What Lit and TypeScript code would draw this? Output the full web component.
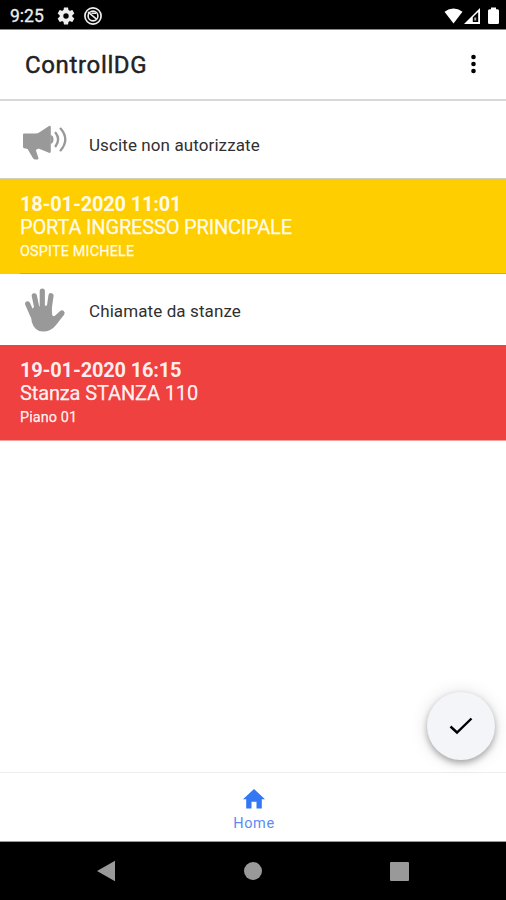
import { LitElement, html, css, svg } from "lit";
import { customElement, property } from "lit/decorators.js";

const megaphone = svg`<svg width="46" height="36" viewBox="0 0 46 36">
  <path fill="#999" d="M2 8.6 Q1 8.6 1 9.6 V22 Q1 23 2.2 23.3 L5.6 24 L11 33.3 Q11.7 34.4 13 34.4 L15.6 34.4 Q17 34 16.3 32.7 L13.8 25 L16.5 23.4 L27 27.8 Q28.8 28.2 28.8 26.6 V2 Q28.8 0.2 27 0.9 L17.5 7.2 Q15.6 8.6 13.5 8.6 Z"/>
  <path fill="#999" d="M28.5 10 Q31.5 10.5 31.5 14.4 Q31.5 18.3 28.5 18.8Z"/>
  <g fill="none" stroke="#999" stroke-width="2.3" stroke-linecap="round"><path d="M33.6 7.8 Q38.8 14.5 33.6 21.2"/><path d="M38.6 3.6 Q48 14.5 38.6 25.4"/></g></svg>`;

const hand = svg`<svg width="42" height="45" viewBox="0 0 42 45">
  <g fill="none" stroke="#999" stroke-linecap="round" stroke-width="5.2"><path d="M3.7 17 L9 29"/><path d="M10.3 8.8 L13.5 24"/><path d="M18.3 4.1 V24"/><path d="M27 8.7 L24.8 24"/><path d="M38 26 L29 34.5"/></g>
  <path fill="#999" d="M6.2 24 L10 20 L27.4 18 L28.2 28 Q29.5 30.2 31.5 28.4 L36.5 24 L40.3 27.3 L32.5 37.5 Q27 44.6 19 44.6 Q10.5 44.3 7.8 35 Z"/></svg>`;

@customElement("status-bar")
class StatusBar extends LitElement {
  static styles = css`
    :host { display: flex; align-items: center; height: 29px; box-sizing: border-box; padding: 2px 7px 0 10px; background: #000; border-bottom: 0; color: #eee; }
    .time { font-size: 17.5px; line-height: 28px; width: 47px; letter-spacing: 0; font-weight: 400; -webkit-text-stroke: .3px; }
    svg { display: block; flex: none; }
    .ring { margin-left: 8px; }
    .space { flex: 1; }
    .sig { margin-left: 1px; }
    .bat { margin-left: 8px; }
  `;
  render() {
    return html`<span class="time">9:25</span>
      ${svg`<svg width="18" height="18" viewBox="1.4 1.4 21.2 21.2"><path fill="#eee" d="M19.43 12.98c.04-.32.07-.64.07-.98s-.03-.66-.07-.98l2.11-1.65c.19-.15.24-.42.12-.64l-2-3.46c-.12-.22-.39-.3-.61-.22l-2.49 1c-.52-.4-1.08-.73-1.69-.98l-.38-2.65C14.46 2.18 14.25 2 14 2h-4c-.25 0-.46.18-.49.42l-.38 2.65c-.61.25-1.17.59-1.69.98l-2.49-1c-.23-.09-.49 0-.61.22l-2 3.46c-.13.22-.07.49.12.64l2.11 1.65c-.04.32-.07.65-.07.98s.03.66.07.98l-2.11 1.65c-.19.15-.24.42-.12.64l2 3.46c.12.22.39.3.61.22l2.49-1c.52.4 1.08.73 1.69.98l.38 2.65c.03.24.24.42.49.42h4c.25 0 .46-.18.49-.42l.38-2.65c.61-.25 1.17-.59 1.69-.98l2.49 1c.23.09.49 0 .61-.22l2-3.46c.12-.22.07-.49-.12-.64l-2.11-1.65zM12 15.2a3.2 3.2 0 1 1 0-6.4 3.2 3.2 0 0 1 0 6.4z"/></svg>
      <svg class="ring" width="20" height="20" viewBox="0 0 20 20" fill="none" stroke="#eee"><circle cx="10" cy="10" r="8.1" stroke-width="1.7"/><circle cx="10" cy="10" r="4.9" stroke-width="1.6"/><path stroke-width="1.6" d="M5 6 L13.5 13.2 M8.5 7.2 H13"/></svg>`}
      <span class="space"></span>
      ${svg`<svg width="19" height="18" viewBox="0 0 19 18"><path fill="#fff" d="M.5 4.8 Q9.5 -2 18.5 4.8 L9.5 16.5Z"/></svg>
      <svg class="sig" width="16" height="18" viewBox="0 0 16 18"><path fill="#fff" d="M0 17 L16 1 V17Z"/><path fill="#000" d="M8.8 10.2 L14.2 5 V15 H8.8Z"/><path fill="#aaa" d="M10.3 10.5 H12.2 V13.5 H10.3Z"/></svg>
      <svg class="bat" width="11" height="18" viewBox="0 0 11 18"><path fill="#fff" d="M3 .5 H8 V2.3 H9.5 Q11 2.3 11 3.8 V15.7 Q11 17 9.6 17 H1.4 Q0 17 0 15.7 V3.8 Q0 2.3 1.5 2.3 H3Z"/></svg>`}`;
  }
}

@customElement("alert-card")
class AlertCard extends LitElement {
  @property() when = "";
  @property() place = "";
  @property() detail = "";
  static styles = css`
    :host { display: block; height: 95px; box-sizing: border-box; padding: 14px 20px 0; color: rgba(255,255,255,.93); white-space: nowrap; }
    div { height: 23px; line-height: 23px; font-size: 20px; }
    .when { font-weight: 700; letter-spacing: -.17px; }
    .place { letter-spacing: var(--place-space, 0); -webkit-text-stroke: .25px; }
    .detail { font-size: 14.4px; line-height: 26px; letter-spacing: var(--detail-space, 0); -webkit-text-stroke: .25px; }
  `;
  render() {
    return html`<div class="when">${this.when}</div><div class="place">${this.place}</div><div class="detail">${this.detail}</div>`;
  }
}

@customElement("app-root")
class AppRoot extends LitElement {
  static styles = css`
    :host { display: flex; flex-direction: column; position: relative; width: 100%; height: 900px; overflow: hidden; background: #fff; font-family: Roboto, "Noto Sans", sans-serif; color: #222; }
    header { height: 72px; box-sizing: border-box; flex: none; display: flex; align-items: center; justify-content: space-between; padding: 0 30px 2px 25px; border-top: 1px solid #888; border-bottom: 2px solid #d8d8d8; }
    h1 { margin: 3px 0 0; font-size: 24px; font-weight: 400; letter-spacing: .65px; line-height: 30px; -webkit-text-stroke: .45px; }
    svg { display: block; }
    .row { display: flex; align-items: center; box-sizing: border-box; flex: none; font-size: 17px; letter-spacing: .1px; color: #303030; }
    .out { height: 78px; padding: 9px 0 0 22px; border-bottom: 1px solid #d6cfb8; }
    .calls { height: 71px; padding: 0 0 0 24px; }
    .out svg { margin-bottom: 2px; }
    .out span { margin: 2px 0 0 21px; }
    .calls svg { margin-bottom: 1px; }
    .calls span { margin: 2px 0 0 23px; }
    .yellow { background: linear-gradient(#d6ae10, #d6ae10) 20px 100% / 100% 1px no-repeat #ffce00; --place-space: -.17px; --detail-space: .18px; }
    .red { height: 96px; background: #f04141; --place-space: -.13px; --detail-space: .12px; border-bottom: 1px solid #f6a0a0; }
    main { flex: 1; display: flex; flex-direction: column; }
    .fab { position: absolute; right: 11px; top: 692px; width: 68px; height: 68px; border: 0; padding: 0; border-radius: 50%; background: #f4f5f8; display: grid; place-items: center; box-shadow: 0 3px 6px rgba(0,0,0,.3), 0 1px 18px rgba(0,0,0,.13); }
    .tabs { height: 70px; box-sizing: border-box; flex: none; display: flex; flex-direction: column; align-items: center; padding: 16px 0 0 2px; border-top: 1px solid #eee; border-bottom: 1px solid #999; color: #5b8cf6; font-size: 14.5px; line-height: 18px; letter-spacing: .6px; }
    .tabs span { margin-top: 6px; }
    .nav { height: 58px; flex: none; display: flex; justify-content: space-between; align-items: center; background: #000; padding: 0 97px 0 97px; box-sizing: border-box; }
  `;
  render() {
    return html`<status-bar></status-bar>
      <header><h1>ControllDG</h1>${svg`<svg width="5" height="20" viewBox="0 0 5 20"><circle cx="2.5" cy="3" r="2.3"/><circle cx="2.5" cy="10" r="2.3"/><circle cx="2.5" cy="17" r="2.3"/></svg>`}</header>
      <main>
        <div class="row out">${megaphone}<span>Uscite non autorizzate</span></div>
        <alert-card class="yellow" when="18-01-2020 11:01" place="PORTA INGRESSO PRINCIPALE" detail="OSPITE MICHELE"></alert-card>
        <div class="row calls">${hand}<span>Chiamate da stanze</span></div>
        <alert-card class="red" when="19-01-2020 16:15" place="Stanza STANZA 110" detail="Piano 01"></alert-card>
      </main>
      <button class="fab" aria-label="Conferma">${svg`<svg width="24" height="20" viewBox="0 0 24 20"><path d="M1.5 10.5 L8 16.5 L22.5 2.5" fill="none" stroke="#000" stroke-width="2.4"/></svg>`}</button>
      <div class="tabs">${svg`<svg width="22" height="20" viewBox="0 0 22 20"><path fill="#3377f4" d="M11 0 L22 10.2 H18.8 V19.5 H13.5 V12.8 H8.5 V19.5 H3.2 V10.2 H0 Z"/></svg>`}<span>Home</span></div>
      <div class="nav">${svg`<svg width="18" height="22" viewBox="0 0 18 22"><path fill="#999" d="M0 11 L18 .7 V21.3Z"/></svg>
        <svg width="18" height="18"><circle cx="9" cy="9" r="9" fill="#999"/></svg>
        <svg width="19" height="19"><rect width="19" height="19" rx="1" fill="#999"/></svg>`}</div>`;
  }
}
